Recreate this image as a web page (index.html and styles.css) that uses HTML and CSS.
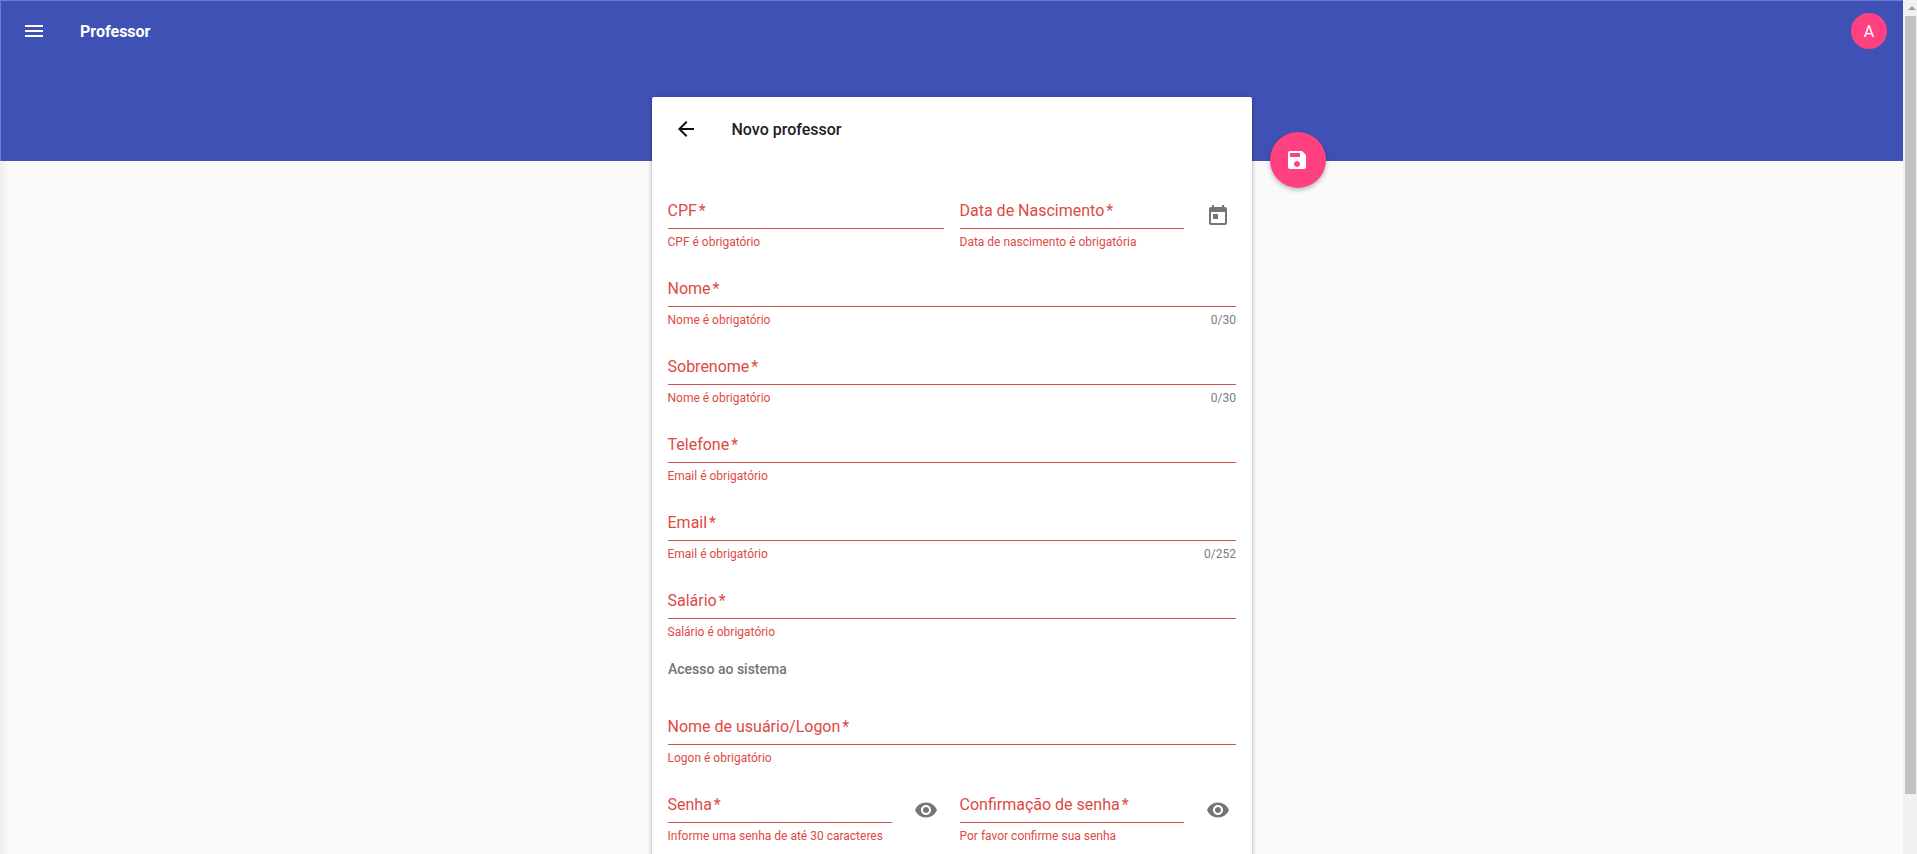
FILE: index.html
```html
<!DOCTYPE html>
<html lang="pt-BR">
<head>
<meta charset="utf-8">
<title>Professor</title>
<link rel="stylesheet" href="styles.css">
</head>
<body>
<div class="window">
  <div class="page">
    <header class="toolbar">
      <svg class="icon" viewBox="0 0 24 24"><path d="M3 18h18v-2H3v2zm0-5h18v-2H3v2zm0-7v2h18V6H3z"/></svg>
      <h1 class="toolbar-title">Professor</h1>
      <span class="avatar">A</span>
    </header>
    <main class="card">
      <button class="fab" aria-label="Salvar"><svg class="icon" viewBox="0 0 24 24"><path d="M17 3H5c-1.11 0-2 .9-2 2v14c0 1.1.89 2 2 2h14c1.1 0 2-.9 2-2V7l-4-4zm-5 16c-1.66 0-3-1.34-3-3s1.34-3 3-3 3 1.34 3 3-1.34 3-3 3zm3-10H5V5h10v4z"/></svg></button>
      <div class="card-header">
        <svg class="icon" viewBox="0 0 24 24"><path d="M20 11H7.83l5.59-5.59L12 4l-8 8 8 8 1.41-1.41L7.83 13H20v-2z"/></svg>
        <h2 class="card-title">Novo professor</h2>
      </div>
      <form class="form">
        <div class="row">
          <div class="field"><label class="label">CPF<span class="star">*</span></label><div class="hints"><span>CPF é obrigatório</span></div></div>
          <div class="group">
            <div class="field"><label class="label">Data de Nascimento<span class="star">*</span></label><div class="hints"><span>Data de nascimento é obrigatória</span></div></div>
            <svg class="icon suffix" viewBox="0 0 24 24"><path d="M19 3h-1V1h-2v2H8V1H6v2H5c-1.11 0-1.99.9-1.99 2L3 19c0 1.1.89 2 2 2h14c1.1 0 2-.9 2-2V5c0-1.1-.9-2-2-2zm0 16H5V8h14v11zM7 10h5v5H7z"/></svg>
          </div>
        </div>
        <div class="field"><label class="label">Nome<span class="star">*</span></label><div class="hints"><span>Nome é obrigatório</span><span class="count">0/30</span></div></div>
        <div class="field"><label class="label">Sobrenome<span class="star">*</span></label><div class="hints"><span>Nome é obrigatório</span><span class="count">0/30</span></div></div>
        <div class="field"><label class="label">Telefone<span class="star">*</span></label><div class="hints"><span>Email é obrigatório</span></div></div>
        <div class="field"><label class="label">Email<span class="star">*</span></label><div class="hints"><span>Email é obrigatório</span><span class="count">0/252</span></div></div>
        <div class="field"><label class="label">Salário<span class="star">*</span></label><div class="hints"><span>Salário é obrigatório</span></div></div>
        <h3 class="section">Acesso ao sistema</h3>
        <div class="field"><label class="label">Nome de usuário/Logon<span class="star">*</span></label><div class="hints"><span>Logon é obrigatório</span></div></div>
        <div class="row">
          <div class="group">
            <div class="field"><label class="label">Senha<span class="star">*</span></label><div class="hints"><span>Informe uma senha de até 30 caracteres</span></div></div>
            <svg class="icon suffix" viewBox="0 0 24 24"><path d="M12 4.5C7 4.5 2.73 7.61 1 12c1.73 4.39 6 7.5 11 7.5s9.27-3.11 11-7.5c-1.73-4.39-6-7.5-11-7.5zM12 17c-2.76 0-5-2.24-5-5s2.24-5 5-5 5 2.24 5 5-2.24 5-5 5zm0-8c-1.66 0-3 1.34-3 3s1.34 3 3 3 3-1.34 3-3-1.34-3-3-3z"/></svg>
          </div>
          <div class="group">
            <div class="field"><label class="label">Confirmação de senha<span class="star">*</span></label><div class="hints"><span>Por favor confirme sua senha</span></div></div>
            <svg class="icon suffix" viewBox="0 0 24 24"><path d="M12 4.5C7 4.5 2.73 7.61 1 12c1.73 4.39 6 7.5 11 7.5s9.27-3.11 11-7.5c-1.73-4.39-6-7.5-11-7.5zM12 17c-2.76 0-5-2.24-5-5s2.24-5 5-5 5 2.24 5 5-2.24 5-5 5zm0-8c-1.66 0-3 1.34-3 3s1.34 3 3 3 3-1.34 3-3-1.34-3-3-3z"/></svg>
          </div>
        </div>
      </form>
    </main>
  </div>
  <div class="scrollbar">
    <svg class="scroll-up" viewBox="0 0 8 4"><path d="M4 0l4 4H0z"/></svg>
    <div class="thumb"></div>
  </div>
</div>
</body>
</html>
```
FILE: styles.css
```css
* { box-sizing: border-box; }

body {
  margin: 0;
  font-family: Roboto, "Liberation Sans", sans-serif;
  overflow: hidden;
}

h1, h2, h3 { margin: 0; }

.window {
  display: flex;
  height: 854px;
  overflow: hidden;
}

.page {
  width: 1903px;
  height: 854px;
  overflow: hidden;
  background: linear-gradient(90deg, #eeeeee, #fafafa 9px);
}

.toolbar {
  display: flex;
  align-items: flex-start;
  height: 161px;
  padding: 12px 16px 0 21px;
  background: #3f51b5;
  border-top: 1px solid #6e7cc9;
  border-left: 1px solid #6e7cc9;
  color: #fff;
}

.icon {
  display: block;
  flex: none;
  width: 24px;
  height: 24px;
  fill: currentColor;
}

.toolbar > .icon { margin-top: 6px; }

.toolbar-title {
  margin-left: 34px;
  font-size: 16px;
  font-weight: 700;
  line-height: 38px;
}

.avatar {
  width: 36px;
  height: 36px;
  margin-left: auto;
  border-radius: 50%;
  background: #ff4081;
  font-size: 16px;
  line-height: 37px;
  text-align: center;
}

.card {
  position: relative;
  width: 600px;
  height: 820px;
  margin: -64px 0 0 652px;
  border-radius: 2px;
  background: #fff;
  box-shadow: 0 1px 5px rgba(0, 0, 0, .25), 0 2px 2px rgba(0, 0, 0, .16), 0 3px 1px -2px rgba(0, 0, 0, .12);
}

.card-header {
  display: flex;
  align-items: center;
  height: 64px;
  padding-left: 21.5px;
  color: #212121;
}

.card-header .icon { color: #111; }

.card-title {
  margin-left: 34px;
  font-size: 16px;
  font-weight: 500;
}

/* Save button overlapping the card's right side */
.fab {
  position: absolute;
  left: 618px;
  top: 35px;
  width: 56px;
  height: 56px;
  padding: 0 2px 0 0;
  display: flex;
  align-items: center;
  justify-content: center;
  border: 0;
  border-radius: 50%;
  background: #ff4081;
  color: #fff;
  box-shadow: 0 2px 5px rgba(0, 0, 0, .28);
}

.form { padding: 39px 16px 0; }

.row {
  display: grid;
  grid-template-columns: 1fr 1fr;
  gap: 16px;
}

.group { display: flex; }
.group .field { width: 224px; }
.suffix { margin: 4px 6.5px 0 21.5px; color: #757575; }

.field {
  height: 78px;
  color: #dd4a45;
}

.label {
  display: block;
  height: 29px;
  padding-top: 1px;
  border-bottom: 1px solid #cb4f4b;
  font-size: 16px;
  line-height: 20px;
  text-indent: -0.5px;
}

.star { margin-left: 2px; }

.hints {
  display: flex;
  justify-content: space-between;
  padding-top: 5px;
  font-size: 12px;
  line-height: 16px;
  text-indent: -0.5px;
}

.count { color: #7d7d7d; }

.section {
  height: 57px;
  margin-top: -9px;
  color: #757575;
  font-size: 14px;
  font-weight: 500;
  line-height: 20px;
}

.scrollbar {
  width: 14px;
  height: 854px;
  padding: 6px 1px 0 2px;
  background: #f1f1f1;
}

.scroll-up {
  display: block;
  width: 8px;
  height: 4px;
  margin: 0 0 6px 3px;
  fill: #9e9e9e;
}

.thumb {
  height: 778px;
  background: #c1c1c1;
}
```
